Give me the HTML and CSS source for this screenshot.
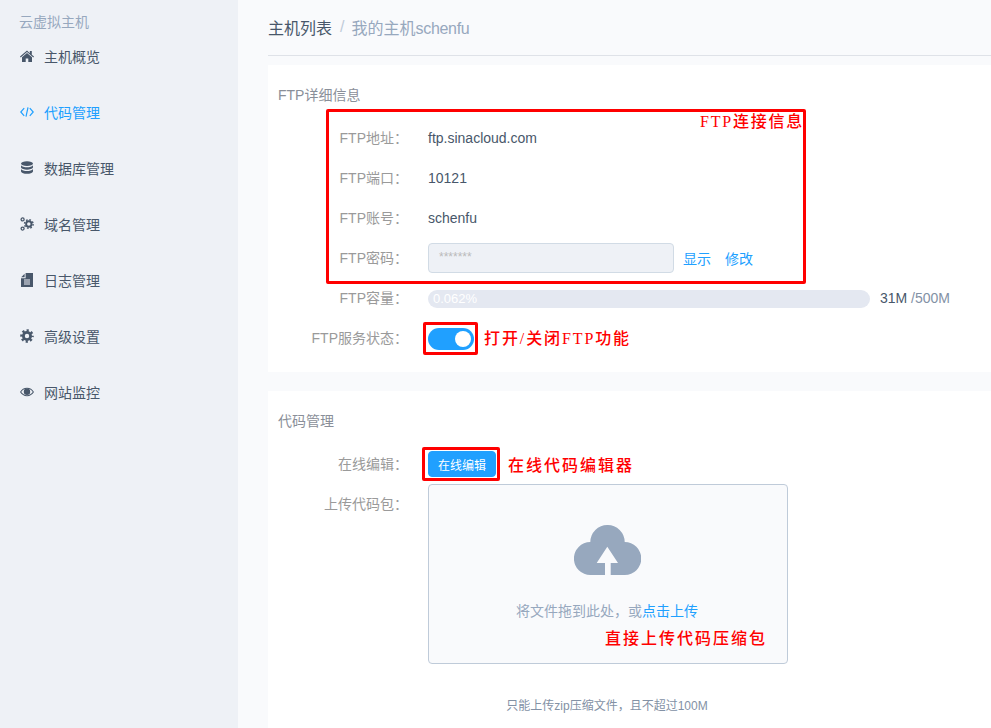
FILE: index.html
```html
<!DOCTYPE html>
<html lang="zh-CN">
<head>
<meta charset="utf-8">
<title>我的主机schenfu</title>
<link rel="stylesheet" href="styles.css">
</head>
<body>
<div class="app">
  <aside class="sidebar">
    <div class="group-title">云虚拟主机</div>
    <nav class="menu">
      <a class="menu-item"><svg class="icon" viewBox="0 0 14 14"><path d="M7 1.600 0 7.600l.7.8L7 3.100l6.300 5.300.7-.8-2.200-1.900V2h-2v2.200L7 1.600zM2 8.200V13h3.700V9.600h2.600V13H12V8.200L7 4 2 8.200z"/></svg><span>主机概览</span></a>
      <a class="menu-item active"><svg class="icon" viewBox="0 0 14 14"><path d="M4.200 3.200.8 7l3.400 3.800M9.800 3.200 13.200 7l-3.400 3.800M8 2.400 6 11.600" fill="none" stroke="currentColor" stroke-width="1.200"/></svg><span>代码管理</span></a>
      <a class="menu-item"><svg class="icon" viewBox="0 0 14 14"><ellipse cx="7" cy="2.600" rx="6" ry="2.300"/><path d="M1 4.200c1 1.500 3.400 2 6 2s5-.5 6-2v2.400c-.6 1.500-3.200 2.100-6 2.100s-5.400-.6-6-2.100V4.200zM1 8c1 1.500 3.400 2 6 2s5-.5 6-2v2.500c-.4 1.500-3.200 2.300-6 2.300s-5.600-.8-6-2.300V8z"/></svg><span>数据库管理</span></a>
      <a class="menu-item"><svg class="icon" viewBox="0 0 14 14"><circle cx="8.800" cy="7" r="2.700" fill="none" stroke="currentColor" stroke-width="1.900"/><circle cx="8.800" cy="7" r="4.300" fill="none" stroke="currentColor" stroke-width="1.400" stroke-dasharray="1.690 1.690"/><circle cx="2.600" cy="2.400" r="1.500" fill="none" stroke="currentColor" stroke-width="1.300"/><circle cx="2.600" cy="11.600" r="1.500" fill="none" stroke="currentColor" stroke-width="1.300"/></svg><span>域名管理</span></a>
      <a class="menu-item"><svg class="icon" viewBox="0 0 14 14"><path d="M1.200 4.200 4.600 .8V4.200z"/><path d="M5.600 0H13V14H1V5.200H5.600zM4 6.400v1.100h6V6.400zM4 8.400v1.100h6V8.400zM4 10.400v1.100h6v-1.100z" fill-rule="evenodd"/></svg><span>日志管理</span></a>
      <a class="menu-item"><svg class="icon" viewBox="0 0 14 14"><circle cx="7" cy="7" r="3.600" fill="none" stroke="currentColor" stroke-width="2.800"/><circle cx="7" cy="7" r="5.600" fill="none" stroke="currentColor" stroke-width="2.400" stroke-dasharray="2.200 2.200" stroke-dashoffset="1.100"/></svg><span>高级设置</span></a>
      <a class="menu-item"><svg class="icon" viewBox="0 0 14 14"><path d="M0 7c1.600-2.700 4-4.200 7-4.200S12.400 4.300 14 7c-1.600 2.700-4 4.200-7 4.200S1.600 9.700 0 7zm1.200 0C2.600 9 4.600 10.200 7 10.200S11.400 9 12.800 7C11.400 5 9.400 3.800 7 3.800S2.600 5 1.200 7z" fill-rule="evenodd"/><circle cx="7" cy="6.800" r="3.200"/></svg><span>网站监控</span></a>
    </nav>
  </aside>

  <main class="main">
    <header class="crumbs">
      <span class="crumb-root">主机列表</span>
      <span class="crumb-sep">/</span>
      <span class="crumb-leaf">我的主机<span class="crumb-latin">schenfu</span></span>
    </header>

    <section class="card card-ftp">
      <h2 class="card-title">FTP详细信息</h2>
      <div class="row"><label class="row-label">FTP地址：</label><span class="row-value">ftp.sinacloud.com</span></div>
      <div class="row"><label class="row-label">FTP端口：</label><span class="row-value">10121</span></div>
      <div class="row"><label class="row-label">FTP账号：</label><span class="row-value">schenfu</span></div>
      <div class="row">
        <label class="row-label">FTP密码：</label>
        <div class="pwd">*******</div>
        <a class="link link-show">显示</a>
        <a class="link link-edit">修改</a>
      </div>
      <div class="row">
        <label class="row-label">FTP容量：</label>
        <div class="progress"><span class="progress-text">0.062%</span></div>
        <span class="usage"><span class="usage-used">31M</span> /500M</span>
      </div>
      <div class="row">
        <label class="row-label">FTP服务状态：</label>
        <span class="switch"><span class="knob"></span></span>
      </div>
    </section>

    <section class="card card-code">
      <h2 class="card-title">代码管理</h2>
      <div class="row row-edit">
        <label class="row-label">在线编辑：</label>
        <button class="btn">在线编辑</button>
      </div>
      <div class="row row-upload">
        <label class="row-label">上传代码包：</label>
        <div class="upload-col">
          <div class="dropzone">
            <svg class="cloud" viewBox="0 0 67 50"><path d="M50.800 50H16.500a16.500 16.500 0 0 1-.2-33A17 17 0 0 1 33.500 0a17 17 0 0 1 17.200 17 16.500 16.500 0 0 1 .1 33z"/><path class="cloud-arrow" d="M33.300 21.700 22.700 38H31v12h5.700V38H44z"/></svg>
            <p class="drop-text">将文件拖到此处，或<a class="link">点击上传</a></p>
          </div>
          <p class="tip">只能上传zip压缩文件，且不超过100M</p>
        </div>
      </div>
    </section>
  </main>
</div>

<div class="mark mark-info"></div>
<div class="note note-info">FTP连接信息</div>
<div class="mark mark-switch"></div>
<div class="note note-switch">打开/关闭FTP功能</div>
<div class="mark mark-edit"></div>
<div class="note note-edit">在线代码编辑器</div>
<div class="note note-upload">直接上传代码压缩包</div>
</body>
</html>
```

FILE: styles.css
```css
* { box-sizing: border-box; }
html, body { margin: 0; height: 100%; overflow: hidden; }
body {
  position: relative;
  font-family: "Liberation Sans", "Noto Sans CJK SC", sans-serif;
  font-size: 14px;
  color: #48576a;
  background: #f9fafc;
}
.app { display: flex; height: 728px; overflow: hidden; }

.sidebar { width: 238px; flex: none; background: #eef1f6; }
.group-title { padding: 14px 0 0 19px; height: 28px; line-height: 16px; color: #97a8be; }
.menu { display: flex; flex-direction: column; }
.menu-item { display: flex; align-items: center; height: 56px; padding-left: 20px; color: #48576a; }
.menu-item.active { color: #20a0ff; }
.icon { width: 14px; height: 14px; margin-right: 10px; fill: currentColor; flex: none; }

.main { flex: 1; min-width: 0; padding-left: 30px; }
.crumbs { height: 56px; border-bottom: 1px solid #dfe2e8; display: flex; align-items: center; font-size: 16px; padding-bottom: 1px; }
.crumb-root { color: #48576a; }
.crumb-sep { color: #bfcbd9; margin: 0 7px 0 8px; }
.crumb-leaf { color: #97a8be; }
.crumb-latin { letter-spacing: -0.3px; }

.card { background: #fff; padding: 0 0 0 10px; }
.card-ftp { margin-top: 9px; height: 307px; padding-top: 22px; }
.card-code { margin-top: 19px; height: 337px; padding-top: 22px; }
.card-title { margin: 0 0 15px; font-size: 14px; font-weight: 400; line-height: 16px; color: #8a8f99; }

.row { display: flex; align-items: center; height: 40px; }
.row-label { width: 130px; margin: -2px 20px 0 0; flex: none; text-align: right; color: #9a9a9a; }
.row-value { color: #48576a; }

.pwd {
  width: 246px; height: 30px; padding: 0 10px; line-height: 26px;
  font-size: 12px; color: #bbb;
  background: #eef1f6; border: 1px solid #d1dbe5; border-radius: 4px;
}
.link { color: #20a0ff; }
.link-show { margin-left: 9px; }
.link-edit { margin-left: 14px; }

.progress { width: 442px; height: 18px; margin-top: 2px; border-radius: 9px; background: #e4e8f1; padding-left: 5px; line-height: 17px; }
.progress-text { color: #fff; font-size: 13px; }
.usage { margin-left: 10px; color: #8391a5; }
.usage-used { color: #48576a; }

.switch { display: flex; align-items: center; justify-content: flex-end; width: 46px; height: 22px; margin-top: 2px; padding-right: 3px; border-radius: 11px; background: #20a0ff; }
.knob { width: 16px; height: 16px; border-radius: 50%; background: #fff; }

.btn {
  width: 68px; height: 26px; padding: 0; border: 1px solid #20a0ff; border-radius: 4px;
  background: #20a0ff; color: #fff; font: 12px "Liberation Sans", "Noto Sans CJK SC", sans-serif;
}
.row-upload { height: auto; align-items: flex-start; }
.row-upload .row-label { line-height: 40px; margin-top: 0; }
.upload-col { width: 360px; }
.dropzone {
  height: 180px; padding: 40px 2px 0 0; border: 1px solid #bfcbd9; border-radius: 4px; background: #f9fafc;
  display: flex; flex-direction: column; align-items: center;
}
.cloud { width: 67px; height: 50px; fill: #97a8be; }
.cloud-arrow { fill: #f9fafc; }
.drop-text { margin: 26px 0 0; color: #97a8be; line-height: 20px; }
.tip { margin: 33px 2px 0 0; text-align: center; font-size: 12px; line-height: 18px; color: #8391a5; }

.mark { position: absolute; border: 3px solid #f00; border-radius: 2px; }
.mark-info { left: 326px; top: 109px; width: 480px; height: 175px; }
.mark-switch { left: 423px; top: 322px; width: 55px; height: 33px; }
.mark-edit { left: 422px; top: 447px; width: 78px; height: 34px; }
.note {
  position: absolute; color: #f00; font-family: "Liberation Serif", "Noto Sans CJK SC", serif;
  font-size: 16px; font-weight: 500; line-height: 20px; letter-spacing: 2px; white-space: nowrap;
}
.note-info { left: 700px; top: 112px; letter-spacing: 1.800px; }
.note-switch { left: 484px; top: 329px; letter-spacing: 1.900px; }
.note-edit { left: 508px; top: 456px; }
.note-upload { left: 605px; top: 629px; }
```
